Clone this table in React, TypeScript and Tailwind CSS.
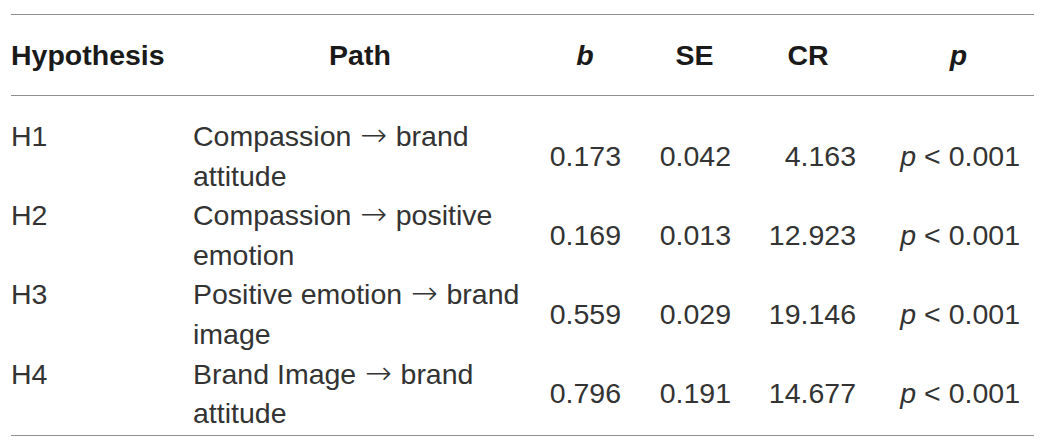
const rows = [
  { h: 'H1', from: 'Compassion', to: 'brand', rest: 'attitude', b: '0.173', se: '0.042', cr: '4.163' },
  { h: 'H2', from: 'Compassion', to: 'positive', rest: 'emotion', b: '0.169', se: '0.013', cr: '12.923' },
  { h: 'H3', from: 'Positive emotion', to: 'brand', rest: 'image', b: '0.559', se: '0.029', cr: '19.146' },
  { h: 'H4', from: 'Brand Image', to: 'brand', rest: 'attitude', b: '0.796', se: '0.191', cr: '14.677' },
];

const cols = 'grid grid-cols-[182px_356px_109px_102px_137px_1fr]';

function Arrow() {
  return (
    <span
      className="inline-block w-[28.5px] text-center text-[32px] leading-none font-extralight"
      style={{ fontFamily: '"DejaVu Sans", sans-serif' }}
    >
      →
    </span>
  );
}

export default function App() {
  return (
    <div
      className="w-[1045px] h-[447px] bg-white pt-[14px] text-[28.5px] text-[#333]"
      style={{ fontFamily: '"Liberation Sans", Arial, sans-serif' }}
    >
      <div className="mx-[11px] border-t border-b border-[#8e8e8e]">
        <div className={`${cols} h-[81px] items-center border-b border-[#8e8e8e] font-bold text-[#1a1a1a]`}>
          <div>Hypothesis</div>
          <div className="pr-[22px] text-center">Path</div>
          <div className="pr-[37px] text-center italic">b</div>
          <div className="pr-[29px] text-center">SE</div>
          <div className="pr-[41px] text-center">CR</div>
          <div className="pr-[14px] text-center italic">p</div>
        </div>
        <div className="pt-[21px] pb-[1px]">
          {rows.map((r) => (
            <div key={r.h} className={`${cols} leading-[39.6px] items-center`}>
              <div className="self-start">{r.h}</div>
              <div className="pr-[22px]">
                {r.from} <Arrow /> {r.to}
                <br />
                {r.rest}
              </div>
              <div className="pr-[37px] text-right">{r.b}</div>
              <div className="pr-[29px] text-right">{r.se}</div>
              <div className="pr-[41px] text-right">{r.cr}</div>
              <div className="pr-[14px] text-right">
                <i>p</i> &lt; 0.001
              </div>
            </div>
          ))}
        </div>
      </div>
    </div>
  );
}
